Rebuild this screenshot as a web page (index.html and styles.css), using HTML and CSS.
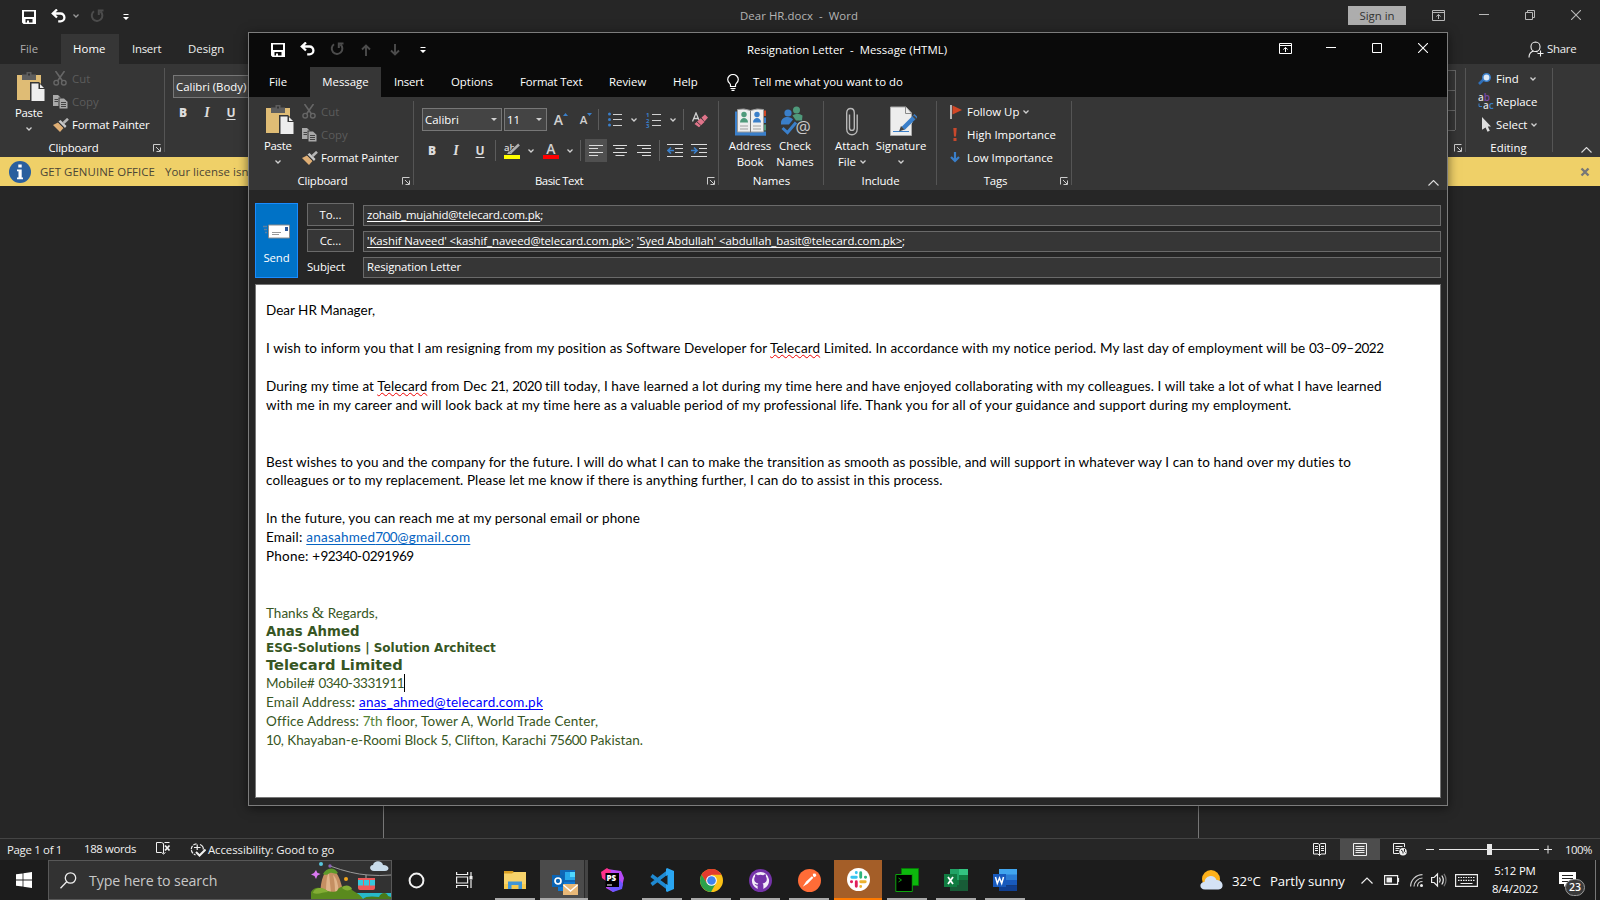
FILE: index.html
```html
<!DOCTYPE html>
<html lang="en">
<head>
<meta charset="utf-8">
<title>Resignation Letter - Message (HTML)</title>
<link rel="stylesheet" href="styles.css">
</head>
<body>
<svg class="defs" aria-hidden="true">
  <symbol id="save" viewBox="0 0 14 14"><path fill="currentColor" fill-rule="evenodd" d="M0 0h14v14H1.500L0 12.500zM2 1.500V7h10V1.500zM3.500 9v3.500H5V10.500h2v2h3.500V9z"/></symbol>
  <symbol id="undo" viewBox="0 0 16 14"><path fill="none" stroke="currentColor" stroke-width="2.300" d="M2 4.500h7.500a3.900 3.900 0 0 1 0 7.800H7.200M6 .5L1.800 4.500 6 8.500"/></symbol>
  <symbol id="redo" viewBox="0 0 14 14"><path fill="none" stroke="currentColor" stroke-width="2" d="M4 2.300A5.300 5.300 0 1 0 10.500 2.600M13.500 1.500H8.800V6"/></symbol>
  <symbol id="chev" viewBox="0 0 6 4"><path fill="none" stroke="currentColor" stroke-width="1.300" d="M.5.500L3 3 5.500.500"/></symbol>
  <symbol id="tri" viewBox="0 0 6 3"><path fill="currentColor" d="M0 0h6L3 3z"/></symbol>
  <symbol id="qat" viewBox="0 0 6 6"><path fill="currentColor" d="M.5 0h5v1h-5zM0 3h6L3 6z"/></symbol>
  <symbol id="up" viewBox="0 0 10 12"><path fill="none" stroke="currentColor" stroke-width="1.900" d="M5 12V2M1 5.500L5 1.500l4 4"/></symbol>
  <symbol id="down" viewBox="0 0 10 12"><path fill="none" stroke="currentColor" stroke-width="1.900" d="M5 0v10M1 6.500l4 4 4-4"/></symbol>
  <symbol id="launch" viewBox="0 0 8 8"><path fill="none" stroke="currentColor" d="M.5 7.500V.5H7.500M3 3l4 4M7.500 3.500v4h-4"/></symbol>
  <symbol id="collapse" viewBox="0 0 11 6"><path fill="none" stroke="currentColor" stroke-width="1.100" d="M.5 5.500l5-5 5 5"/></symbol>
  <symbol id="ribbon" viewBox="0 0 13 11"><path fill="none" stroke="currentColor" d="M.5.500h12v10H.500zM.5 2.500h12M6.500 9V4.500M4.300 6.500l2.200-2 2.200 2"/></symbol>
  <symbol id="min" viewBox="0 0 10 10"><path fill="currentColor" d="M0 4h10v1H0z"/></symbol>
  <symbol id="max" viewBox="0 0 10 10"><path fill="none" stroke="currentColor" d="M.5.500h9v9h-9z"/></symbol>
  <symbol id="restore" viewBox="0 0 10 10"><path fill="none" stroke="currentColor" d="M.5 2.500h7v7h-7zM2.500 2V.5h7v7H8"/></symbol>
  <symbol id="close" viewBox="0 0 10 10"><path fill="none" stroke="currentColor" stroke-width="1.100" d="M0 0l10 10M10 0L0 10"/></symbol>
  <symbol id="paste" viewBox="0 0 28 30"><path fill="#dfbc75" d="M0 3h24v25H0z"/><path fill="#5e5e5e" d="M5 2.500h4.500V0h5v2.500H19V8H5z"/><path fill="#363636" d="M11 1.500h2v2h-2zM13 10h9l6 6v14H13z"/><path fill="#ededed" d="M14.500 11.500h7V17h6v12h-13z"/><path fill="#ededed" d="M23 12l4 4h-4z"/></symbol>
  <symbol id="cut" viewBox="0 0 14 15"><path fill="none" stroke="#666" stroke-width="1.600" d="M2.500 0l7 10M11.500 0l-7 10"/><g fill="none" stroke="#666" stroke-width="1.400"><circle cx="3.200" cy="11.700" r="2.300"/><circle cx="10.800" cy="11.700" r="2.300"/></g></symbol>
  <symbol id="copy" viewBox="0 0 15 14"><path fill="#a9a9a9" d="M0 0h5l3 3v8H0z"/><path fill="#363636" d="M5.500 2.500H12l3 3V14H5.500z"/><path fill="#a9a9a9" d="M6.500 3.500h4.500l3.500 3.200V13.500h-8z"/><path stroke="#444" d="M1.500 4.500H5M1.500 6.500H5M8 7.500h5M8 9.500h5M8 11.500h5"/></symbol>
  <symbol id="painter" viewBox="0 0 16 14"><path fill="#dfae74" d="M0 7l5-2.500 5.500 5.500L7 14z"/><path fill="#c8c8c8" d="M5.500 3.500l2-1.500 6 6-1.500 2z"/><path stroke="#b5b5b5" stroke-width="2.600" d="M10.500 5L15 .8"/><path stroke="#363636" d="M5 4l6.500 6.500"/></symbol>
  <symbol id="bulb" viewBox="0 0 12 17"><path fill="none" stroke="currentColor" stroke-width="1.200" d="M3.500 12.500V11C3.500 9.500.7 8.500.7 5.500a5.300 5 0 0 1 10.600 0c0 3-2.800 4-2.800 5.500v1.500zM3.500 14.500h5M4.500 16.400h3"/></symbol>
  <symbol id="bullets" viewBox="0 0 14 15"><g fill="#3a7fca"><circle cx="1.500" cy="2" r="1.500"/><circle cx="1.500" cy="7.500" r="1.500"/><circle cx="1.500" cy="13" r="1.500"/></g><path stroke="#d0d0d0" d="M5 2.500h9M5 7.500h9M5 13.500h9"/></symbol>
  <symbol id="erase" viewBox="0 0 16 16"><path fill="none" stroke="#d0d0d0" stroke-width="1.300" d="M.5 9.500L4 1l3 7M2 6.500h4"/><path fill="#e0748a" d="M9.500 5.500l3.500-3 3 3-3.500 4zM8.700 6.200l3.800 3.700L7 15.300 2.500 12z"/><path stroke="#363636" stroke-width=".9" d="M4.500 9.500l5 4.500"/></symbol>
  <symbol id="al" viewBox="0 0 14 11"><path stroke="#dcdcdc" d="M0 .5h14M0 3.500h9M0 7.500h14M0 10.500h9"/></symbol>
  <symbol id="ac" viewBox="0 0 14 11"><path stroke="#dcdcdc" d="M0 .5h14M2.500 3.500h9M0 7.500h14M2.500 10.500h9"/></symbol>
  <symbol id="ar" viewBox="0 0 14 11"><path stroke="#dcdcdc" d="M0 .5h14M5 3.500h9M0 7.500h14M5 10.500h9"/></symbol>
  <symbol id="outd" viewBox="0 0 16 13"><path stroke="#dcdcdc" d="M0 .5h16M8 4.500h8M8 8.500h8M0 12.500h16"/><path fill="none" stroke="#3a7fca" stroke-width="1.600" d="M7 6.500H1.500M4 3.500l-3 3 3 3"/></symbol>
  <symbol id="ind" viewBox="0 0 16 13"><path stroke="#dcdcdc" d="M0 .5h16M8 4.500h8M8 8.500h8M0 12.500h16"/><path fill="none" stroke="#3a7fca" stroke-width="1.600" d="M0 6.500h5.500M3 3.500l3 3-3 3"/></symbol>
  <symbol id="book" viewBox="0 0 31 28"><path fill="#3a7fca" d="M0 4h16v24H0zM15 25h16v3H15z"/><path fill="#d24726" d="M28 3h3v5.500h-3z"/><path fill="#3a7fca" d="M28 10h3v5.500h-3zM15 24h16v4H15z"/><path fill="#4f9a7b" d="M28 17h3v6h-3z"/><path fill="#eee" stroke="#9a9a9a" d="M2.500 2Q9 .500 15.500 3 22 .500 28.500 2v22.500H2.500z"/><path stroke="#777" d="M15.500 3v22"/><g fill="#4f9a7b"><circle cx="9" cy="7" r="2.700"/><path d="M5 15c0-6 8-6 8 0z"/></g><g fill="#3a7fca"><circle cx="22" cy="7" r="2.700"/><path d="M18 15c0-6 8-6 8 0z"/></g><path stroke="#a0a0a0" d="M5 18.500h8M5 21.500h8M18 18.500h8M18 21.500h8"/></symbol>
  <symbol id="clip" viewBox="0 0 12 28"><path fill="none" stroke="#b8b8b8" stroke-width="1.400" d="M3.500 7v13.500a2.400 2.400 0 0 0 4.800 0V5.500C8.300-.6.700-.6.700 5.500v16c0 7.600 10.500 7.600 10.500 0V7"/></symbol>
  <symbol id="sign" viewBox="0 0 27 30"><path fill="#ededed" stroke="#aaa" d="M.5.500h15.500L21.500 6.500v22.500H.5z"/><path fill="none" stroke="#888" d="M15.500.500v6.500h6"/><path stroke="#3a7fca" d="M3 25h16"/><path stroke="#ededed" stroke-width="6" d="M14 20.500L20.500 14"/><path stroke="#3a7fca" stroke-width="4.500" d="M13 22L26 9"/><path fill="#444" d="M9 25l2-5.500 3.500 3.500zM22.500 10l1.300-1.300 3 3-1.300 1.300z"/></symbol>
  <symbol id="flag" viewBox="0 0 13 14"><path fill="#b5b5b5" d="M1 0h2v14H1z"/><path fill="#d24726" d="M3.500.500L13 5l-9.500 4.500z"/></symbol>
  <symbol id="bang" viewBox="0 0 4 13"><path fill="#c8482c" d="M.3 0h3.400L3 8.500H1zM.5 10h3v3h-3z"/></symbol>
  <symbol id="low" viewBox="0 0 10 11"><path fill="none" stroke="#3a7fca" stroke-width="2.200" d="M5 0v8.500M1 5l4 4 4-4"/></symbol>
  <symbol id="person" viewBox="0 0 16 17"><path fill="none" stroke="currentColor" stroke-width="1.100" d="M7.500 1a4.300 4.500 0 0 1 0 9.500 4.300 4.500 0 0 1 0-9.500M1 16.500c0-4 2.500-6 5-6.500M8 10.200l1.500.8M12.500 9.500v6M9.500 12.500h6"/></symbol>
  <symbol id="find" viewBox="0 0 13 12"><path stroke="#2f6fb8" stroke-width="2.600" d="M1 11l5-5"/><circle cx="8.500" cy="4.500" r="3.700" fill="#dfeaf6" stroke="#3a7fca" stroke-width="1.600"/></symbol>
  <symbol id="select" viewBox="0 0 9 15"><path fill="#ddd" d="M0 0l9 9.500H5.800l2 4.300-2.300 1-1.900-4.400L0 12.800z"/></symbol>
  <symbol id="spell" viewBox="0 0 15 13"><path fill="none" stroke="currentColor" d="M7.500 11.500V1.500L5.500.500H.5v10h5l2 1.500 2-1.500M8.500.500h5"/><path fill="none" stroke="currentColor" stroke-width="1.800" d="M9 3.500l4.500 5M13.500 3.500L9 8.500"/></symbol>
  <symbol id="access" viewBox="0 0 16 14"><path fill="none" stroke="currentColor" stroke-width="1.200" stroke-dasharray="3.500 1" d="M6.500.8a5.600 5.600 0 0 0-1 11"/><path fill="none" stroke="currentColor" stroke-width="1.200" d="M4 4.500h6.500M7.200 1.500v5.500M10 1.500c2.500 1 3.500 3 3.300 5"/><path fill="none" stroke="currentColor" stroke-width="2" d="M6 9l3.500 3.500 6-6"/></symbol>
  <symbol id="read" viewBox="0 0 13 13"><path fill="none" stroke="currentColor" d="M6.500 12.500V1.500L5 .5H.5v10.500H5l1.500 1.500L8 11h4.500V.5H8L6.500 1.500M2 3.500h3M2 5.500h3M2 7.500h3M8 3.500h3M8 5.500h3M8 7.500h3"/></symbol>
  <symbol id="print" viewBox="0 0 14 13"><path fill="none" stroke="currentColor" d="M.5.500h13v12H.500zM2.500 3.500h9M2.500 5.500h9M2.500 7.500h9M2.500 9.500h9"/></symbol>
  <symbol id="web" viewBox="0 0 14 13"><path fill="none" stroke="currentColor" d="M6 10.500H.5V.5h11V4M2.500 3.500h7M2.500 5.500h4M2.500 7.500h3"/><circle cx="10" cy="8.800" r="3.800" fill="currentColor"/><path fill="none" stroke="#262626" d="M8 7l2 1.500v2M11.500 6v2.500l1 1"/></symbol>
</svg>

<div class="desktop">
  <!-- Word, behind the message window -->
  <section class="word">
    <header class="wtitle">
      <div class="qat">
        <svg class="q1" width="14" height="14"><use href="#save"/></svg>
        <svg class="q2" width="16" height="14"><use href="#undo"/></svg>
        <svg class="q3" width="6" height="4"><use href="#chev"/></svg>
        <svg class="q4" width="14" height="14"><use href="#redo"/></svg>
        <svg class="q5" width="6" height="6"><use href="#qat"/></svg>
      </div>
      <div class="wname"><span>Dear HR.docx&nbsp; -&nbsp; Word</span></div>
      <div class="signin"><span>Sign in</span></div>
      <div class="wbtns">
        <i><svg width="13" height="11"><use href="#ribbon"/></svg></i>
        <i><svg width="10" height="10"><use href="#min"/></svg></i>
        <i><svg width="10" height="10"><use href="#restore"/></svg></i>
        <i><svg width="10" height="10"><use href="#close"/></svg></i>
      </div>
    </header>
    <nav class="wtabs">
      <span class="wt-file">File</span><span class="wt-home">Home</span><span class="wt-ins">Insert</span><span class="wt-des">Design</span>
      <div class="share"><svg width="16" height="17"><use href="#person"/></svg><span>Share</span></div>
    </nav>
    <div class="ribbon wribbon">
      <div class="group g-clip">
        <div class="gbody">
          <div class="paste"><svg width="28" height="30"><use href="#paste"/></svg><span>Paste</span><svg width="6" height="4"><use href="#chev"/></svg></div>
          <div class="rows">
            <div class="dis"><i><svg width="14" height="15"><use href="#cut"/></svg></i><span>Cut</span></div>
            <div class="dis"><i><svg width="15" height="14"><use href="#copy"/></svg></i><span>Copy</span></div>
            <div class="fp"><i><svg width="16" height="14"><use href="#painter"/></svg></i><span>Format Painter</span></div>
          </div>
        </div>
        <div class="glabel"><span>Clipboard</span><svg width="8" height="8"><use href="#launch"/></svg></div>
      </div>
      <div class="wfont">
        <div class="combo"><span>Calibri (Body)</span></div>
        <div class="biu"><b>B</b><em>I</em><u>U</u></div>
      </div>
      <div class="wgal">
        <div class="galbtns"><i></i><i></i><i></i></div>
        <svg width="8" height="8"><use href="#launch"/></svg>
      </div>
      <div class="group g-edit">
        <div class="gbody">
          <div class="rows">
            <div><i><svg width="13" height="12"><use href="#find"/></svg></i><span>Find</span><svg class="mc" width="6" height="4"><use href="#chev"/></svg></div>
            <div><i><svg width="16" height="16" viewBox="0 0 16 16"><g font-family="Open Sans" font-size="10" font-weight="600"><text x="0" y="7" fill="#ddd">a<tspan fill="#7d4aa8">b</tspan></text><text x="5" y="15" fill="#ddd">a<tspan fill="#3a7fca">c</tspan></text></g><path fill="none" stroke="#3a7fca" d="M1 9.500v3h3"/></svg></i><span>Replace</span></div>
            <div><i><svg width="9" height="15"><use href="#select"/></svg></i><span>Select</span><svg class="sc" width="6" height="4"><use href="#chev"/></svg></div>
          </div>
        </div>
        <div class="glabel"><span>Editing</span></div>
      </div>
      <svg class="coll" width="11" height="6"><use href="#collapse"/></svg>
    </div>
    <div class="genuine">
      <svg width="22" height="22" viewBox="0 0 22 22"><circle cx="11" cy="11" r="11" fill="#2a5f9e"/><path fill="#fff" d="M9.300 3.500h3.400v3H9.300zM8 8.500h4.700v8H14v1.700H8v-1.700h1.500v-6.300H8z"/></svg>
      <span class="gg">GET GENUINE OFFICE</span><span class="lic">Your license isn't genuine</span>
      <svg class="gx" width="8" height="8" viewBox="0 0 8 8"><path stroke="#777" stroke-width="2.400" d="M.5.500l7 7M7.500.500l-7 7"/></svg>
    </div>
    <div class="canvas"><div class="sheet"></div></div>
    <footer class="status">
      <span class="s1">Page 1 of 1</span><span class="s2">188 words</span>
      <svg class="s3" width="15" height="13"><use href="#spell"/></svg>
      <svg class="s4" width="16" height="14"><use href="#access"/></svg><span class="s5">Accessibility: Good to go</span>
      <div class="views">
        <i><svg width="13" height="13"><use href="#read"/></svg></i>
        <i class="on"><svg width="14" height="13"><use href="#print"/></svg></i>
        <i><svg width="14" height="13"><use href="#web"/></svg></i>
      </div>
      <svg class="zoom" width="128" height="12" viewBox="0 0 128 12"><path fill="#e8e8e8" d="M0 5h8v1H0zM13 5h100v1H13zM61 0h5v11h-5zM118 5h8v1h-8zM121.500 1.500h1v8h-1z"/></svg>
      <span class="pct">100%</span>
    </footer>
  </section>

  <!-- Outlook message window -->
  <section class="mail">
    <header class="mtitle">
      <div class="qat">
        <svg class="q1" width="14" height="14"><use href="#save"/></svg>
        <svg class="q2" width="16" height="14"><use href="#undo"/></svg>
        <svg class="q4" width="14" height="14"><use href="#redo"/></svg>
        <svg class="q6" width="10" height="12"><use href="#up"/></svg>
        <svg class="q7" width="10" height="12"><use href="#down"/></svg>
        <svg class="q5" width="6" height="6"><use href="#qat"/></svg>
      </div>
      <div class="mname"><span>Resignation Letter&nbsp; -&nbsp; Message (HTML)</span></div>
      <div class="wbtns">
        <i><svg width="13" height="11"><use href="#ribbon"/></svg></i>
        <i><svg width="10" height="10"><use href="#min"/></svg></i>
        <i><svg width="10" height="10"><use href="#max"/></svg></i>
        <i><svg width="10" height="10"><use href="#close"/></svg></i>
      </div>
    </header>
    <nav class="mtabs">
      <span class="m1">File</span><span class="m2">Message</span><span class="m3">Insert</span><span class="m4">Options</span><span class="m5">Format Text</span><span class="m6">Review</span><span class="m7">Help</span>
      <svg width="12" height="17"><use href="#bulb"/></svg><span class="tell">Tell me what you want to do</span>
    </nav>
    <div class="ribbon mribbon">
      <div class="group g-clip">
        <div class="gbody">
          <div class="paste"><svg width="28" height="30"><use href="#paste"/></svg><span>Paste</span><svg width="6" height="4"><use href="#chev"/></svg></div>
          <div class="rows">
            <div class="dis"><i><svg width="14" height="15"><use href="#cut"/></svg></i><span>Cut</span></div>
            <div class="dis"><i><svg width="15" height="14"><use href="#copy"/></svg></i><span>Copy</span></div>
            <div class="fp"><i><svg width="16" height="14"><use href="#painter"/></svg></i><span>Format Painter</span></div>
          </div>
        </div>
        <div class="glabel"><span>Clipboard</span><svg width="8" height="8"><use href="#launch"/></svg></div>
      </div>
      <div class="group g-text">
        <div class="gbody">
          <div class="r1">
            <div class="combo c80"><span>Calibri</span><svg width="6" height="3"><use href="#tri"/></svg></div>
            <div class="combo c43"><span>11</span><svg width="6" height="3"><use href="#tri"/></svg></div>
            <i class="w27 big">A<svg width="5" height="3" viewBox="0 0 5 3"><path fill="#3a7fca" d="M0 3h5L2.500 0z"/></svg></i>
            <i class="w24 small">A<svg width="5" height="3" viewBox="0 0 5 3"><path fill="#3a7fca" d="M0 0h5L2.500 3z"/></svg></i>
            <i class="sep"></i>
            <i class="w31"><svg width="14" height="15"><use href="#bullets"/></svg></i>
            <i class="w8"><svg width="6" height="4"><use href="#chev"/></svg></i>
            <i class="w31"><svg width="15" height="16" viewBox="0 0 15 16"><g fill="#3a7fca" font-family="Open Sans" font-size="6" font-weight="700"><text x="0" y="5">1</text><text x="0" y="10.500">2</text><text x="0" y="16">3</text></g><path stroke="#d0d0d0" d="M6 2.500h9M6 8.500h9M6 13.500h9"/></svg></i>
            <i class="w8"><svg width="6" height="4"><use href="#chev"/></svg></i>
            <i class="sep ml6"></i>
            <i class="w31"><svg width="16" height="16"><use href="#erase"/></svg></i>
          </div>
          <div class="r2">
            <div class="biu"><b>B</b><em>I</em><u>U</u></div>
            <i class="sep ml3"></i>
            <i class="w31"><svg width="16" height="16" viewBox="0 0 16 16"><text x="0" y="7.500" fill="#d8d8d8" font-family="Open Sans" font-size="9.500" font-weight="600">ab</text><path stroke="#363636" stroke-width="4" d="M6 10.500L15.500 1"/><path stroke="#b0b0b0" stroke-width="2.500" d="M6.500 9.500L15 1.500"/><path fill="#b0b0b0" d="M3 11l2-3 3 3z"/><path fill="#ff0" d="M0 12h16v4H0z"/></svg></i>
            <i class="w8"><svg width="6" height="4"><use href="#chev"/></svg></i>
            <i class="w33"><svg width="16" height="16" viewBox="0 0 16 16"><text x="3.200" y="11" fill="#d0d0d0" font-family="Open Sans" font-size="14" font-weight="600">A</text><path fill="#f00" d="M0 12h16v4H0z"/></svg></i>
            <i class="w6"><svg width="6" height="4"><use href="#chev"/></svg></i>
            <i class="sep ml8"></i>
            <i class="w22 pressed"><svg width="14" height="11"><use href="#al"/></svg></i>
            <i class="w25"><svg width="14" height="11"><use href="#ac"/></svg></i>
            <i class="w24"><svg width="14" height="11"><use href="#ar"/></svg></i>
            <i class="sep ml3"></i>
            <i class="w30"><svg width="16" height="13"><use href="#outd"/></svg></i>
            <i class="w18"><svg width="16" height="13"><use href="#ind"/></svg></i>
          </div>
        </div>
        <div class="glabel"><span>Basic Text</span><svg width="8" height="8"><use href="#launch"/></svg></div>
      </div>
      <div class="group g-names">
        <div class="gbody">
          <div class="bigbtn b-addr"><svg width="31" height="28"><use href="#book"/></svg><span>Address</span><span>Book</span></div>
          <div class="bigbtn b-check"><svg width="31" height="31" viewBox="0 0 31 31"><g fill="#4f9a7b"><circle cx="15.500" cy="4" r="3.500"/><path d="M11.500 9.500q5-3.500 10 0l-.5 5h-6z"/></g><g fill="#3a7fca"><circle cx="7" cy="7" r="3.600"/><path d="M0 16.500c0-6 9-7.500 12-3l-4 5H0z"/></g><path fill="none" stroke="#3a7fca" stroke-width="3" d="M1.500 22l5 4.500 8.500-10"/><text x="14.500" y="27" fill="#c9c9c9" font-family="Open Sans" font-size="17">@</text></svg><span>Check</span><span>Names</span></div>
        </div>
        <div class="glabel"><span>Names</span></div>
      </div>
      <div class="group g-inc">
        <div class="gbody">
          <div class="bigbtn b-att"><svg width="12" height="28"><use href="#clip"/></svg><span>Attach</span><div class="fl"><span>File</span><svg width="6" height="4"><use href="#chev"/></svg></div></div>
          <div class="bigbtn b-sig"><svg width="27" height="30"><use href="#sign"/></svg><span>Signature</span><div class="fl"><svg width="6" height="4"><use href="#chev"/></svg></div></div>
        </div>
        <div class="glabel"><span>Include</span></div>
      </div>
      <div class="group g-tags">
        <div class="gbody">
          <div class="rows">
            <div><i><svg width="13" height="14"><use href="#flag"/></svg></i><span>Follow Up</span><svg class="sc" width="6" height="4"><use href="#chev"/></svg></div>
            <div><i><svg width="4" height="13"><use href="#bang"/></svg></i><span>High Importance</span></div>
            <div><i><svg width="10" height="11"><use href="#low"/></svg></i><span>Low Importance</span></div>
          </div>
        </div>
        <div class="glabel"><span>Tags</span><svg width="8" height="8"><use href="#launch"/></svg></div>
      </div>
      <svg class="coll" width="11" height="6"><use href="#collapse"/></svg>
    </div>
    <div class="compose">
      <div class="send">
        <svg width="28" height="15" viewBox="0 0 28 15"><path stroke="#5a7fa3" stroke-width="1.500" d="M0 2.500h4M1 5.500h3M2 8.500h2"/><path fill="#fff" stroke="#8a8a8a" d="M5.500 1h21v13h-21z"/><path fill="#2b579a" d="M22 3h3v4h-3z"/><path stroke="#999" d="M9 8.500h9M9 10.500h7"/></svg>
        <span>Send</span>
      </div>
      <div class="fields">
        <div class="btn"><span>To...</span></div><div class="field to"><span><u>zohaib_mujahid@telecard.com.pk</u>;</span></div>
        <div class="btn"><span>Cc...</span></div><div class="field cc"><span><u>'Kashif Naveed' &lt;kashif_naveed@telecard.com.pk&gt;</u>; <u>'Syed Abdullah' &lt;abdullah_basit@telecard.com.pk&gt;</u>;</span></div>
        <div class="subj"><span>Subject</span></div><div class="field sb"><span>Resignation Letter</span></div>
      </div>
    </div>
    <article class="letter">
      <p>Dear HR Manager,</p>
      <p>&nbsp;</p>
      <p class="t1">I wish to inform you that I am resigning from my position as Software Developer for <span class="sq">Telecard</span> Limited. In accordance with my notice period. My last day of employment will be <span class="n">03</span>–<span class="n">09</span>–<span class="n">2022</span></p>
      <p>&nbsp;</p>
      <p class="t1">During my time at <span class="sq">Telecard</span> from Dec <span class="n">21</span>, <span class="n">2020</span> till today, I have learned a lot during my time here and have enjoyed collaborating with my colleagues. I will take a lot of what I have learned</p>
      <p class="t2">with me in my career and will look back at my time here as a valuable period of my professional life. Thank you for all of your guidance and support during my employment.</p>
      <p>&nbsp;</p>
      <p>&nbsp;</p>
      <p class="t3">Best wishes to you and the company for the future. I will do what I can to make the transition as smooth as possible, and will support in whatever way I can to hand over my duties to</p>
      <p class="t3">colleagues or to my replacement. Please let me know if there is anything further, I can do to assist in this process.</p>
      <p>&nbsp;</p>
      <p class="t4">In the future, you can reach me at my personal email or phone</p>
      <p class="t5">Email: <a class="l1">anasahmed<span class="n">700</span>@gmail.com</a></p>
      <p class="t5">Phone: +<span class="n">92340</span>-<span class="n">0291969</span></p>
      <p>&nbsp;</p>
      <p>&nbsp;</p>
      <p class="gr">Thanks <span class="amp">&amp;</span> Regards,</p>
      <p class="gr v1">Anas Ahmed</p>
      <p class="gr v2">ESG-Solutions | Solution Architect</p>
      <p class="gr v3">Telecard Limited</p>
      <p class="gr"><span class="caret">Mobile# <span class="n">0340</span>-<span class="n">3331911</span></span></p>
      <p class="gr t6">Email Address<b>:</b> <a class="l2">anas_ahmed@telecard.com.pk</a></p>
      <p class="gr t4">Office Address: <span class="lite"><span class="n">7</span>th</span> floor, Tower A, World Trade Center,</p>
      <p class="gr t7"><span class="n">10</span>, Khayaban-e-Roomi Block <span class="n">5</span>, Clifton, Karachi <span class="n">75600</span> Pakistan.</p>
    </article>
  </section>

  <!-- Windows taskbar -->
  <footer class="taskbar">
    <div class="start"><svg width="16" height="16" viewBox="0 0 16 16"><path fill="#fff" d="M0 2.300L6.600 1.400v6.200H0zM7.400 1.300L16 0v7.600H7.400zM0 8.400h6.600v6.200L0 13.700zM7.400 8.400H16V16l-8.600-1.300z"/></svg></div>
    <div class="search">
      <svg width="17" height="17" viewBox="0 0 17 17"><g fill="none" stroke="#eee" stroke-width="1.300"><circle cx="10.500" cy="6" r="5.200"/><path d="M6.700 9.800L.5 16.300"/></g></svg>
      <span>Type here to search</span>
      <svg class="scene" width="80" height="38" viewBox="0 0 80 38"><path fill="#27b9c9" d="M44 32h36v6H44z"/><path stroke="#999" fill="none" d="M19 5q22 8 38 9 12 1 23 0"/><path fill="#c58f62" d="M9 34c1-17 4-24 10-26 8 1 11 13 14 26z"/><path fill="#e0b48a" d="M15 32c0-12 1-18 3-20l2 20zM24 31c0-9-1-13-2-17 4 3 5 10 6 17z"/><path fill="#5d9a2a" d="M12 13c3-6 11-8 15-1-3 2-5-1-8 0-2 1-4 3-7 1z"/><path fill="#5a8a1e" d="M0 38V31c3-5 8-5 12-3 5 2 8 4 14 2 2-6 12-6 15-1 4 3 8 4 11 9z"/><path fill="#83ad34" d="M2 32c1-6 12-7 15-1-5 0-10 3-15 1zM31 27c2-4 9-3 10 1-3 2-7 2-10-1z"/><path fill="#4a7a1a" d="M52 38c2-3 10-3 16-2 2-5 8-5 9-1l3 1v2z"/><circle cx="10" cy="3" r="2" fill="#58c7dd"/><circle cx="35" cy="18" r="2" fill="#f3a51c"/><circle cx="19" cy="5" r="1.700" fill="#8b64b5"/><path fill="#d978f0" d="M5 9l1.300 2.700L9.500 13l-3 1.500L5 18l-1.500-3L0 13.500l3-1.600z"/><path stroke="#aaa" d="M55 14v4"/><path fill="#ef5a5a" d="M47 17h17v2H47zM47 24h17v3q0 2-2 2H49q-2 0-2-2z"/><path fill="#35c8de" d="M47 19h17v5.500H47z"/><path stroke="#ef5a5a" d="M52.500 18v7M58.500 18v7"/><path fill="#c9dcea" d="M63 10c-5 0-5-6-1-6 1-5 9-5 10 0 7 0 7 6 2 6z"/></svg>
    </div>
    <div class="tico"><svg width="17" height="17" viewBox="0 0 17 17"><circle cx="8.500" cy="8.500" r="6.900" fill="none" stroke="#f2f2f2" stroke-width="2"/></svg></div>
    <div class="tico"><svg width="17" height="16" viewBox="0 0 17 16"><path fill="none" stroke="#eee" stroke-width="1.200" d="M.6 0v2.500h11V0M.6 16v-2.500h11V16M.6 5h11v6H.6zM15 0v4M15 8v8"/><path fill="#eee" d="M13.500 4h3v3.500h-3z"/></svg></div>
    <div class="apps">
      <div class="run"><svg width="22" height="19" viewBox="0 0 22 19"><path fill="#d99e22" d="M0 0h9l2 3H0z"/><path fill="#f7d36b" d="M0 2.500h8l2-1.500h12v17H0z"/><path fill="#f5c94c" d="M0 13h22v5H0z"/><path fill="#3f95d8" d="M4 10.500h14V18h-3.500v-4h-7v4H4z"/></svg></div>
      <div class="run cur"><svg width="27" height="26" viewBox="0 0 27 26"><path fill="#1066b5" d="M8 1h15v16H8z"/><path fill="#28a8ea" d="M13 3h10v8H13z"/><path fill="#50d9ff" d="M18 3h5v5h-5z"/><path fill="#0f78d4" d="M6 13h17v9H6z"/><path fill="#0a64b4" d="M0 6h12v12H0z"/><circle cx="6" cy="12" r="3" fill="none" stroke="#fff" stroke-width="1.700"/><path fill="#e8b878" d="M11 15h15v11H11z"/><path fill="none" stroke="#fff" stroke-width="1.400" d="M11.500 16l7 6 7-6"/></svg></div>
      <div><svg width="24" height="25" viewBox="0 0 24 25"><path fill="#b74af7" d="M6 1l14 2 3 7-2 9-9 5-7-4 1-9z"/><path fill="#ff318c" d="M0 4l6-4 4 3-5 10-4-3z"/><path fill="#6b57ff" d="M17 10l5 6-1 5-9 3-4-4z"/><path fill="#000" d="M4.500 5H18v14H4.500z"/><text x="5.500" y="12.500" font-family="Open Sans" font-weight="800" font-size="8" fill="#fff">PS</text><path fill="#fff" d="M6 16.500h5v1H6z"/></svg></div>
      <div class="run"><svg width="24" height="24" viewBox="0 0 24 24"><path fill="none" stroke="#1f8ad2" stroke-width="3.600" d="M1.500 7.500L18 20M1.500 16.500L18 4"/><path fill="#2aa6f2" d="M17 0l7 3v18l-7 3-1-1V1z"/><path fill="#1c1c1c" d="M17.500 7v10L11 12z"/></svg></div>
      <div class="run"><svg width="23" height="23" viewBox="0 0 24 24"><circle cx="12" cy="12" r="12" fill="#fbc116"/><path fill="#e33b2e" d="M1.600 6A12 12 0 0 1 22.400 6H12L7 15z"/><path fill="#2ba14b" d="M1.600 6A12 12 0 0 0 11.500 24l5.200-9.300L7 14.500z"/><circle cx="12" cy="12" r="5.600" fill="#fff"/><circle cx="12" cy="12" r="4.500" fill="#3f83ee"/></svg></div>
      <div class="run"><svg width="23" height="23" viewBox="0 0 24 24"><circle cx="12" cy="12" r="12" fill="#7433a8"/><path fill="#f3eef8" d="M12 3a9.200 9.200 0 0 0-3 17.800V17.500c-2 .3-2.500-1-3.300-2 1.300 0 2 1.300 3.300 1 .1-.8.400-1.200.8-1.500-3-.4-4.600-2-4.300-5 0-.9.400-1.600.9-2.200-.2-.9-.1-1.700.2-2.400.9 0 1.800.5 2.600 1.100a9 9 0 0 1 5.600 0c.8-.6 1.700-1.100 2.600-1.100.3.700.4 1.500.2 2.400.5.600.9 1.300.9 2.200.3 3-1.300 4.600-4.300 5 .5.500.8 1.100.8 2v3.800A9.200 9.200 0 0 0 12 3z"/><path fill="#7433a8" d="M9.800 21v-3.500c0-1 .2-1.500.7-2-3-.4-4.500-1.700-4.300-4.600 0-1 .4-1.600.9-2.100-.2-.8-.2-1.500.1-2.200.9 0 1.700.5 2.300 1a8 8 0 0 1 5 0c.6-.5 1.400-1 2.300-1 .3.700.3 1.400.1 2.200.5.500.9 1.100.9 2.100.2 2.900-1.300 4.200-4.300 4.600.5.500.7 1 .7 2V21z" opacity=".0"/></svg></div>
      <div class="run"><svg width="23" height="23" viewBox="0 0 24 24"><circle cx="12" cy="12" r="12" fill="#ff6c37"/><path fill="#fff" d="M5 18.500l3.500-5.500 6-5.500 1.500 1.500-6 6.500zM15.500 5l2.500-.3 1.200 1.800-1.500 2-2-1z"/></svg></div>
      <div class="alert"><svg width="23" height="23" viewBox="0 0 24 24"><circle cx="12" cy="12" r="12" fill="#fff"/><g stroke-width="3" stroke-linecap="round"><path stroke="#36c5f0" d="M5 9.700h4.700M9.700 4.700v.2"/><path stroke="#2eb67d" d="M14.300 5v4.700M19.200 9.700h.2"/><path stroke="#ecb22e" d="M14.300 14.300H19M14.300 19.200v.2"/><path stroke="#e01e5a" d="M9.700 14.300V19M4.800 14.300h-.2"/></g></svg></div>
      <div class="run"><svg width="24" height="24" viewBox="0 0 24 24"><path fill="#0db80d" stroke="#067a06" d="M6.500.500h17v17h-17z"/><path fill="#000" stroke="#0da50d" d="M.8 6.500h16.500v17H.8z"/><path fill="none" stroke="#0da50d" d="M3.500 10l3 2-3 2"/></svg></div>
      <div class="run"><svg width="24" height="22" viewBox="0 0 24 22"><path fill="#21a366" d="M6 0h18v22H6z"/><path fill="#33c481" d="M15 0h9v6h-9z"/><path fill="#107c41" d="M6 11h9v5H6zM15 6h9v5h-9z"/><path fill="#185c37" d="M6 16h18v6H6zM15 11h9v5h-9z"/><path fill="#107c41" d="M0 5h13v13H0z"/><path stroke="#fff" stroke-width="1.800" d="M4 8l5 7M9 8l-5 7"/></svg></div>
      <div class="run"><svg width="24" height="22" viewBox="0 0 24 22"><path fill="#41a5ee" d="M6 0h18v6H6z"/><path fill="#2b7cd3" d="M6 5.500h18V11H6z"/><path fill="#185abd" d="M6 11h18v5.500H6z"/><path fill="#103f91" d="M6 16.500h18V22H6z"/><path fill="#185abd" d="M0 5h13v13H0z"/><path fill="none" stroke="#fff" stroke-width="1.500" d="M2.500 8l1.800 6.500L6.500 9l2.200 5.500L10.500 8"/></svg></div>
    </div>
    <div class="tray">
      <svg class="wx" width="23" height="20" viewBox="0 0 23 20"><circle cx="11" cy="9" r="9" fill="#fdb11b"/><path fill="#d4e2f5" d="M5 19.500C-1 19.500-1 12 4.500 12c1-7 10-8 12-2 7-.5 8.500 9.500 2 9.500z"/></svg>
      <span class="deg">32°C</span><span class="wt">Partly sunny</span>
      <svg class="ty1" width="12" height="7" viewBox="0 0 12 7"><path fill="none" stroke="#eee" stroke-width="1.200" d="M.5 6.500L6 1l5.500 5.500"/></svg>
      <svg class="ty2" width="16" height="10" viewBox="0 0 16 10"><path fill="none" stroke="#eee" stroke-width="1.200" d="M.6.600h13v8.800H.6zM14.500 3v4"/><path fill="#eee" d="M2.500 2.500h5.500v5H2.500z"/></svg>
      <svg class="ty3" width="13" height="13" viewBox="0 0 13 13"><g fill="none" stroke="#ccc" stroke-width="1.200"><path d="M.6 12.500C.6 6 6 .6 12.500.6"/><path d="M4 12.500C4 8 8 4 12.500 4"/><path d="M7.500 12.500c0-3 2-5 5-5"/></g><circle cx="11.500" cy="11.500" r="1.500" fill="#eee"/></svg>
      <svg class="ty4" width="16" height="14" viewBox="0 0 16 14"><g fill="none" stroke="#eee" stroke-width="1.200"><path d="M.6 4.500h2.500L6.500 1v12L3 9.500H.6zM8.500 4.500q1.500 2.500 0 5M10.800 2.500q3 4.500 0 9"/><path stroke="#777" d="M13 .8q4 6 0 12.400"/></g></svg>
      <svg class="ty5" width="23" height="13" viewBox="0 0 23 13"><path fill="none" stroke="#eee" stroke-width="1.200" d="M.6.600h21.800v11.800H.600z"/><path stroke="#eee" stroke-width="1.200" stroke-dasharray="1.500 1" d="M3 3.500h17M3 6.300h17"/><path stroke="#eee" d="M5.500 9.500h12"/></svg>
      <div class="clock"><span>5:12 PM</span><span>8/4/2022</span></div>
      <div class="note"><svg width="17" height="15" viewBox="0 0 17 15"><path fill="#fff" d="M0 0h17v12H8l-3 3v-3H0z"/><path stroke="#222" d="M3 3.500h11M3 6.500h11M3 9.500h6"/></svg><b>23</b></div>
    </div>
  </footer>
</div>
</body>
</html>
```
FILE: styles.css
```css
* { box-sizing: border-box; }
body { margin: 0; width: 1600px; height: 900px; overflow: hidden; background: #262626; color: #fff; font: 11.4px/16px "Open Sans", "Noto Sans", sans-serif; white-space: nowrap; }
svg { display: block; flex: none; overflow: visible; }
.defs { position: absolute; width: 0; height: 0; }
i { font-style: normal; }
.desktop { position: relative; height: 900px; }

/* Word */
.word { height: 860px; display: flex; flex-direction: column; }
.wtitle { height: 34px; display: flex; align-items: flex-start; position: relative; }
.qat { display: flex; align-items: center; height: 34px; width: 240px; color: #fff; }
.q1 { margin-left: 22px; }
.q2 { margin-left: 15px; margin-top: -2px; }
.q3 { margin-left: 6px; margin-top: -2px; color: #999; }
.q4 { margin-left: 11px; margin-top: -2px; color: #4c4c4c; }
.q5 { margin-left: 19px; }
.wname { flex: 1; padding-left: 500px; height: 31px; display: flex; align-items: center; color: #b4b4b4; letter-spacing: .06px; }
.signin { width: 58px; height: 19px; margin-top: 6px; background: #adadad; color: #333; display: flex; align-items: center; justify-content: center; }
.wbtns { display: flex; height: 30px; color: #b8b8b8; margin-left: 9px; margin-right: 1px; }
.wbtns i { width: 46px; display: flex; align-items: center; justify-content: center; }
.wtabs { height: 30px; display: flex; align-items: center; color: #f0f0f0; }
.wtabs > span { height: 30px; line-height: 30px; }
.wt-file { width: 61px; padding-left: 20px; color: #adadad; }
.wt-home { width: 58px; background: #363636; padding-left: 12px; letter-spacing: .1px; color: #fff; }
.wtabs > .wt-ins { padding-left: 13px; width: 69px; letter-spacing: -.25px; }
.share { margin-left: auto; display: flex; gap: 3px; align-items: center; width: 72px; letter-spacing: -.25px; }

.ribbon { height: 93px; background: #363636; display: flex; position: relative; }
.ribbon use { color: inherit; }
.group { position: relative; display: flex; flex-direction: column; }
.group::after { content: ""; position: absolute; right: 0; top: 4px; width: 1px; height: 84px; background: #555; }
.gbody { height: 76px; display: flex; }
.gbody svg { color: #d0d0d0; }
.glabel { height: 16px; display: flex; align-items: center; justify-content: center; position: relative; }
.glabel svg { position: absolute; right: 4px; top: 4px; color: #ccc; }
.g-clip { width: 165px; }
.g-clip .glabel { padding-right: 18px; letter-spacing: -.18px; }
.paste { width: 53px; padding: 8px 0 0 17px; }
.paste span { display: block; margin: 3px 0 0 -2px; letter-spacing: -.3px; }
.paste svg:last-child { margin: 6px 0 0 9px; }
.rows { padding-top: 3px; }
.rows > div { height: 23px; display: flex; align-items: center; }
.rows i { width: 19px; display: flex; }
.rows .dis { color: #5c5c5c; }
.rows .fp { letter-spacing: -.14px; }
.combo { height: 23px; background: #444; border: 1px solid #777; display: flex; align-items: center; justify-content: space-between; padding: 0 4px 0 2px; }
.wfont { padding: 11px 0 0 8px; width: 1283px; }
.wfont .combo { width: 90px; }
.wfont .biu { margin: 7px 0 0 -2px; }
.biu { display: flex; color: #ddd; font-weight: 700; font-size: 12px; }
.biu > * { width: 24px; text-align: center; }
.biu em { font-family: "Liberation Serif", serif; font-size: 14px; font-style: italic; }
.biu u { text-underline-offset: 2px; }
.wgal { width: 18px; padding-top: 6px; position: relative; }
.galbtns { width: 8px; border: 1px solid #666; border-width: 1px 1px 0 0; height: 60px; }
.galbtns i { display: block; height: 20px; border-bottom: 1px solid #666; }
.wgal > svg { margin: 14px 0 0 6px; color: #ccc; }
.g-edit { width: 87px; }
.g-edit .rows { padding-left: 12px; }
.g-edit::before { content: ""; position: absolute; left: -1px; top: 4px; width: 1px; height: 84px; background: #555; }
.g-edit .glabel { padding-right: 2px; }
.g-edit .rows i { width: 18px; }
.g-edit .rows div:nth-child(3) i { padding-left: 4px; }
.mc { margin-left: 11px; } .sc { margin-left: 4px; }
.coll { position: absolute; right: 8px; bottom: 4px; color: #ddd; }
.genuine { height: 29px; background: #efd068; color: #4a4536; display: flex; align-items: center; padding-left: 9px; }
.gg { margin-left: 9px; width: 125px; letter-spacing: .07px; }
.lic { width: 140px; letter-spacing: .06px; }
.gx { margin: 0 11px 0 auto; }
.canvas { height: 652px; padding-left: 383px; }
.sheet { width: 816px; height: 652px; border: 1px solid #777; border-width: 0 1px; }
.status { height: 22px; border-top: 1px solid #444; display: flex; align-items: center; color: #f0f0f0; }
.s1 { margin-left: 7px; width: 77px; letter-spacing: -.3px; } .s2 { width: 72px; letter-spacing: -.36px; margin-top: -1px; } .s3 { margin-top: -2px; } .s4 { margin: 0 2px 0 19px; } .s5 { letter-spacing: -.08px; }
.views { margin-left: auto; display: flex; height: 21px; }
.views i { width: 40px; padding-right: 1px; display: flex; align-items: center; justify-content: center; }
.views .on { background: #4d4d4d; padding: 0; }
.zoom { margin-left: 6px; }
.pct { margin-left: 11px; width: 35px; letter-spacing: -.5px; }

/* message window */
.mail { position: absolute; left: 248px; top: 32px; width: 1200px; height: 774px; border: 1px solid #7c7c7c; background: #262626; box-shadow: 0 2px 10px rgba(0,0,0,.55); }
.mtitle { height: 34px; background: #0a0a0a; display: flex; }
.mtitle .q4 { margin-left: 14px; }
.q6 { margin-left: 17px; color: #4c4c4c; } .q7 { margin-left: 19px; color: #4c4c4c; } .mtitle .q5 { margin-left: 20px; }
.mname { flex: 1; padding-left: 258px; height: 33px; display: flex; align-items: center; letter-spacing: .03px; }
.mtitle .wbtns { color: #fff; margin: 0 1px 0 -1px; }
.mtabs { height: 30px; background: #0a0a0a; display: flex; align-items: center; }
.mtabs span { height: 30px; line-height: 29px; }
.m1 { width: 61px; padding-left: 20px; }
.m2 { width: 71px; background: #363636; text-align: center; }
.m3 { margin-left: 13px; width: 57px; letter-spacing: -.2px; } .m4 { width: 69px; } .m5 { width: 89px; letter-spacing: -.15px; } .m6 { width: 64px; } .m7 { width: 54px; }
.mtabs .tell { margin-left: 14px; }
.g-text { width: 305px; }
.g-text .gbody { flex-direction: column; padding-left: 8px; }
.g-text .glabel { padding-right: 15px; letter-spacing: -.5px; }
.r1 { display: flex; margin-top: 11px; height: 23px; align-items: center; }
.r2 { display: flex; margin: 8px 0 0 -2px; height: 23px; align-items: center; }
.r1 > i, .r2 > i { display: flex; justify-content: center; align-items: center; flex: none; color: #d0d0d0; }
.c80 { width: 80px; margin-right: 2px; } .c43 { width: 43px; }
.w27 { width: 27px; padding-left: 1px; } .w24 { width: 24px; } .w8 { width: 8px; } .w31 { width: 31px; } .w33 { width: 33px; } .w6 { width: 6px; } .w25 { width: 25px; } .w30 { width: 30px; } .w18 { width: 18px; }
.r2 .w33 { width: 32px; }
.r2 .pressed { width: 22px; height: 23px; margin-left: 4px; background: #505050; }
.r1 > .sep, .r2 > .sep { width: 1px; height: 21px; background: #5c5c5c; }
.r1 > .ml6 { margin-left: 6px; } .ml8 { margin-left: 7px; } .ml3 { margin-left: 3px; }
.big { font-size: 14px; font-weight: 600; } .small { font-size: 11.500px; font-weight: 600; }
.big svg, .small svg { margin-top: -10px; }
.g-names { width: 105px; } .g-inc { width: 113px; } .g-tags { width: 135px; }
.bigbtn { display: flex; flex-direction: column; align-items: center; padding-top: 8px; }
.bigbtn > svg { height: 33px; }
.b-addr { width: 46px; margin-left: 8px; letter-spacing: -.1px; } .b-check { width: 44px; }
.b-check > svg { margin-left: 3px; }
.b-att { width: 48px; margin-left: 4px; } .b-sig { width: 50px; }
.b-sig > svg { margin-left: 5px; }
.fl { display: flex; align-items: center; gap: 4px; height: 16px; }
.g-inc .glabel, .g-tags .glabel { letter-spacing: -.15px; }
.g-tags .rows { padding-left: 12px; }
.g-tags .rows i { width: 18px; }
.g-tags .rows div:nth-child(2) i { padding-left: 4px; }
.g-tags .rows div:nth-child(3) i { padding-left: 1px; }
.g-tags .glabel { padding-right: 18px; }

.compose { display: flex; margin: 13px 6px 0; height: 75px; }
.send { width: 43px; background: #0072c6; border: 1px solid #1a8cff; display: flex; flex-direction: column; align-items: center; padding-top: 20px; }
.send span { margin-top: 11px; letter-spacing: -.15px; }
.fields { flex: 1; margin-left: 9px; display: grid; grid-template-columns: 47px 1fr; column-gap: 9px; row-gap: 3px; grid-template-rows: 23px 23px 23px; }
.btn { border: 1px solid #6a6a6a; background: #363636; display: flex; align-items: center; justify-content: center; }
.field { border: 1px solid #6a6a6a; background: #363636; margin-top: 2px; height: 21px; display: flex; align-items: center; padding: 0 0 2px 3px; }
.to { letter-spacing: -.195px; } .cc { letter-spacing: -.067px; } .sb { letter-spacing: -.14px; }
.field u { text-underline-offset: 2px; text-decoration-skip-ink: none; }
.subj { padding-top: 4px; letter-spacing: -.14px; }

.letter { margin: 6px 6px 0; height: 514px; background: #fff; border: 1px solid #777; padding: 16px 0 0 10px; color: #000; font: 13.500px/18.94px Lato, sans-serif; }
.letter p { margin: 0; }
.t1 { letter-spacing: .116px; } .t2 { letter-spacing: .129px; } .t3 { letter-spacing: .099px; } .t4 { letter-spacing: .145px; } .t5 { letter-spacing: .23px; } .t6 { letter-spacing: .239px; } .t7 { letter-spacing: .03px; }
.n { letter-spacing: -.5px; }
.sq { text-decoration: underline wavy #e00 1px; text-underline-offset: 1px; text-decoration-skip-ink: none; }
.l1 { color: #0563c1; text-decoration: underline; text-decoration-skip-ink: none; }
.l2 { color: #00f; text-decoration: underline; text-decoration-skip-ink: none; }
.l1, .l2 { text-underline-offset: 2px; }
.letter .gr { color: #375623; }
.letter .lite { color: #548235; }
.amp { font-family: "Liberation Serif", serif; font-size: 16px; line-height: 1; }
.letter .v1 { font: 700 13.300px/17px "DejaVu Sans", sans-serif; }
.letter .v2 { font: 700 12px/16px "DejaVu Sans", sans-serif; }
.letter .v3 { font: 700 14.700px/18px "DejaVu Sans", sans-serif; }
.caret { border-right: 1px solid #000; padding: 1px 0; }

/* taskbar */
.taskbar { height: 40px; background: #1c1c1c; display: flex; }
.start { width: 48px; display: flex; align-items: center; justify-content: center; }
.search { width: 344px; border: 1px solid #585858; background: #323232; display: flex; align-items: center; padding-left: 11px; position: relative; color: #c8c8c8; font-size: 14.200px; letter-spacing: -.12px; }
.search span { margin: 1px 0 0 12px; }
.scene { margin-left: auto; }
.tico { width: 48px; display: flex; align-items: center; justify-content: center; }
.apps { display: flex; gap: 1px; margin-left: 3px; }
.apps > div { width: 48px; display: flex; align-items: center; justify-content: center; position: relative; }
.apps .run::after { content: ""; position: absolute; left: 4px; right: 4px; bottom: 0; height: 2px; background: #a9a9a9; }
.apps .cur { background: linear-gradient(90deg, #4b4b4b 44px, #2a2a2a 44px, #2a2a2a 45px, #444 45px); }
.apps .cur::after { left: 0; right: 0; }
.apps .cur svg { margin: 4px 0 0 2px; }
.apps .alert { background: #a45e28; border-bottom: 2px solid #ff7a00; }
.tray { display: flex; align-items: center; margin-left: 171px; font-size: 13.200px; letter-spacing: -.1px; color: #fff; flex: 1; }
.deg { margin: 2px 0 0 9px; width: 38px; } .wt { margin-top: 2px; width: 91px; }
.ty2 { margin-left: 11px; } .ty3 { margin-left: 10px; } .ty4 { margin-left: 8px; } .ty5 { margin-left: 8px; }
.clock { margin-left: 10px; width: 54px; font-size: 11.400px; letter-spacing: -.17px; line-height: 18px; display: flex; flex-direction: column; align-items: center; }
.note { margin-left: 17px; position: relative; height: 40px; width: 37px; border-right: 1px solid #777; padding-top: 12px; }
.note b { position: absolute; left: 6px; top: 19px; width: 20px; height: 17px; border-radius: 9px; background: #3a3a3a; border: 1px solid #999; font: 600 10.500px/15px "Open Sans", sans-serif; text-align: center; }
```
